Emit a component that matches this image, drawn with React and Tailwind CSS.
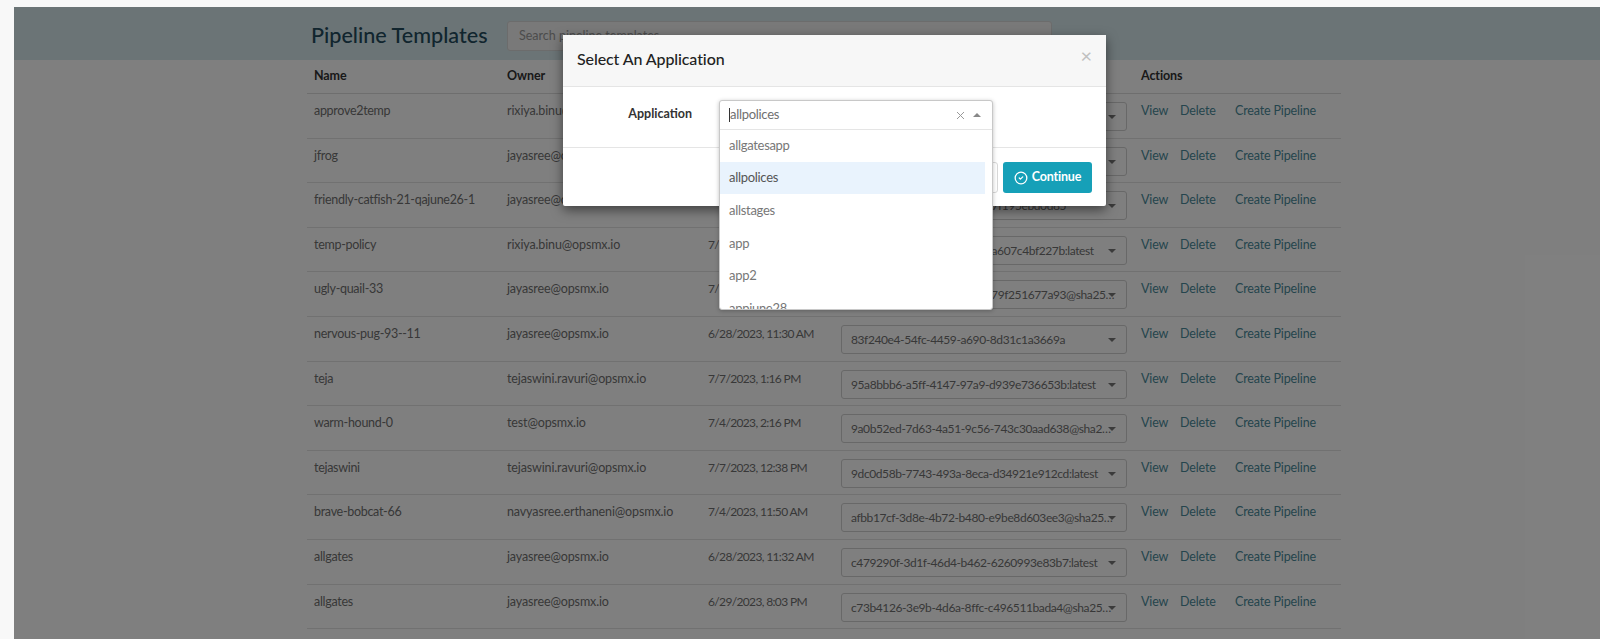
import { CircleCheck } from 'lucide-react';

const rows = [
  ['approve2temp', 'rixiya.binu@opsmx.io', '7/5/2023, 4:12 PM', '1f0a6c2e-8b1d-4f3a-9c57-2ad4e7b1c903:latest'],
  ['jfrog', 'jayasree@opsmx.io', '6/30/2023, 9:48 AM', '3b7e91d4-6a20-4c8e-b1f6-58c2d07e4a16:latest'],
  ['friendly-catfish-21-qajune26-1', 'jayasree@opsmx.io', '6/26/2023, 3:05 PM', '5d20c8f7-94be-4e11-a7d3-7f195ebd0d85'],
  ['temp-policy', 'rixiya.binu@opsmx.io', '7/6/2023, 10:21 AM', '6e41b3a9-2c7f-4d08-8e15-a607c4bf227b:latest'],
  ['ugly-quail-33', 'jayasree@opsmx.io', '7/3/2023, 5:40 PM', '7a93d2c6-18ef-4b52-96a0-79f251677a93@sha256:9c1e'],
  ['nervous-pug-93--11', 'jayasree@opsmx.io', '6/28/2023, 11:30 AM', '83f240e4-54fc-4459-a690-8d31c1a3669a'],
  ['teja', 'tejaswini.ravuri@opsmx.io', '7/7/2023, 1:16 PM', '95a8bbb6-a5ff-4147-97a9-d939e736653b:latest'],
  ['warm-hound-0', 'test@opsmx.io', '7/4/2023, 2:16 PM', '9a0b52ed-7d63-4a51-9c56-743c30aad638@sha256:4e7d'],
  ['tejaswini', 'tejaswini.ravuri@opsmx.io', '7/7/2023, 12:38 PM', '9dc0d58b-7743-493a-8eca-d34921e912cd:latest'],
  ['brave-bobcat-66', 'navyasree.erthaneni@opsmx.io', '7/4/2023, 11:50 AM', 'afbb17cf-3d8e-4b72-b480-e9be8d603ee3@sha256:b2f1'],
  ['allgates', 'jayasree@opsmx.io', '6/28/2023, 11:32 AM', 'c479290f-3d1f-46d4-b462-6260993e83b7:latest'],
  ['allgates', 'jayasree@opsmx.io', '6/29/2023, 8:03 PM', 'c73b4126-3e9b-4d6a-8ffc-c496511bada4@sha256:70ac'],
];

const options = ['allgatesapp', 'allpolices', 'allstages', 'app', 'app2', 'appjune28'];

function Row({ name, owner, date, image }) {
  return (
    <div className="flex h-[44.6px] border-b border-[#e2e2e2] text-[12.5px]">
      <div className="w-[200px] shrink-0 pl-[7px] pt-[8px] tracking-[-0.3px]">{name}</div>
      <div className="w-[200px] shrink-0 pt-[8px] tracking-[-0.13px]">{owner}</div>
      <div className="w-[134px] shrink-0 pl-px pt-[8px] text-[12px] tracking-[-0.65px]">{date}</div>
      <div className="w-[300px] shrink-0 pt-[8px]">
        <div className="relative h-[29px] w-[286px] rounded-[3px] border border-[#d0d0d0] pl-[9px] pr-[10px] text-[12px] leading-[27px] tracking-[-0.4px]">
          <div className="truncate">{image}</div>
          <span className="absolute right-[10px] top-[12px] h-0 w-0 border-x-[4px] border-t-[4px] border-x-transparent border-t-[#777777]" />
        </div>
      </div>
      <div className="flex pt-[8px] tracking-[-0.15px] text-[#4a8a9a]">
        <span className="w-[39px]">View</span>
        <span className="w-[55px]">Delete</span>
        <span>Create Pipeline</span>
      </div>
    </div>
  );
}

export default function App() {
  return (
    <div className="h-[639px] overflow-hidden bg-[#f8f8f8] pl-[14px] pt-[7px] text-[13px] text-[#707070] [font-family:Lato,sans-serif]">
      <div className="relative h-[632px] overflow-hidden bg-white">
        <div className="flex h-[53px] items-start bg-[#d6e9ed] pl-[297px] pt-[14px]">
          <h1 className="w-[196px] text-[21.6px] font-medium leading-[28px] text-[#234a5c]">Pipeline Templates</h1>
          <div className="flex h-[30px] w-[545px] items-center rounded-[3px] border border-[#d8d8d8] bg-[#f2f2f2] pl-[11px] text-[12.5px] text-[#999999]">
            Search pipeline templates
          </div>
        </div>

        <div className="ml-[293px] w-[1034px]">
          <div className="flex h-[34px] items-center border-b border-[#dddddd] text-[12.5px] font-bold tracking-[-0.1px] text-[#333333]">
            <div className="w-[200px] pl-[7px]">Name</div>
            <div className="w-[534px]">Owner</div>
            <div className="pl-[100px]">Actions</div>
          </div>
          {rows.map((r, i) => (
            <Row key={i} name={r[0]} owner={r[1]} date={r[2]} image={r[3]} />
          ))}
        </div>

        <div className="absolute inset-0 bg-black/50" />

        <div className="absolute left-[549px] top-[28px] w-[543px] rounded-[2px] bg-white text-[13px] shadow-[0_4px_12px_rgba(0,0,0,0.5)]">
          <div className="flex h-[52px] items-start justify-between border-b border-[#e5e5e5] bg-[#f7f7f7] px-[14px] pt-[12px]">
            <span className="text-[16px] font-medium tracking-[-0.1px] text-[#222222]">Select An Application</span>
            <span className="mt-[-2px] text-[20px] leading-none text-[#c0c0c0]">×</span>
          </div>
          <div className="flex h-[61px] border-b border-[#e5e5e5] pt-[13px]">
            <div className="w-[156px] pr-[27px] pt-[5px] text-right text-[12.5px] font-bold text-[#333333]">Application</div>
            <div className="relative">
              <div className="absolute left-0 top-0 z-10 w-[274px] rounded-[3px] border border-[#c8c8c8] bg-white tracking-[-0.3px] shadow-[0_1px_4px_rgba(0,0,0,0.25)]">
                <div className="flex h-[29px] items-center border-b border-[#e5e5e5] pl-[9px] pr-[11px]">
                  <span className="h-[14px] w-px bg-[#333333]" />
                  <span className="flex-1">allpolices</span>
                  <svg width="9" height="9" viewBox="0 0 9 9" className="mr-[8px]">
                    <path d="M1 1l7 7M8 1L1 8" stroke="#999999" strokeWidth="1" />
                  </svg>
                  <span className="h-0 w-0 border-x-[4px] border-b-[4px] border-x-transparent border-b-[#888888]" />
                </div>
                <div className="-mt-px h-[180px] overflow-hidden pr-[7px] text-[#777777]">
                  {options.map(o => (
                    <div
                      key={o}
                      className={`flex h-[32.7px] items-center pl-[9px] ${o === 'allpolices' ? 'bg-[#e9f3fd] text-[#555555]' : ''}`}
                    >
                      {o}
                    </div>
                  ))}
                </div>
              </div>
            </div>
          </div>
          <div className="flex h-[58px] items-start justify-end gap-[5px] pr-[14px] pt-[14px]">
            <div className="h-[31px] w-[70px] rounded-[3px] border border-[#d8d8d8] bg-white" />
            <button className="flex h-[31px] w-[89px] items-center justify-center gap-[4px] rounded-[3px] bg-[#16a0b8] text-[12.5px] font-bold tracking-[-0.2px] text-white">
              <CircleCheck size={14} strokeWidth={2.2} />
              Continue
            </button>
          </div>
        </div>
      </div>
    </div>
  );
}
